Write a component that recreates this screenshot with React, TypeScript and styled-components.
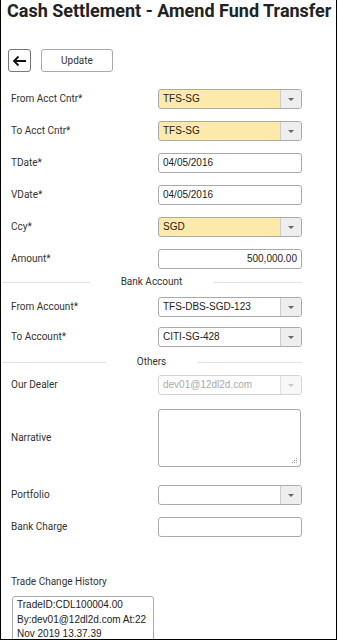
import React from "react";
import styled, { createGlobalStyle } from "styled-components";

const Global = createGlobalStyle`
  html, body { margin: 0; padding: 0; background: #fff; }
  body { font-family: Roboto, "Liberation Sans", sans-serif; }
  * { box-sizing: border-box; }
`;

const Page = styled.div`
  width: 337px;
  height: 640px;
  border: 1px solid #000;
  border-top: none;
  overflow: hidden;
  background: #fff;
`;

const Title = styled.h1`
  margin: 0;
  padding-left: 6px;
  font-family: Roboto, "Liberation Sans", sans-serif;
  font-weight: 700;
  font-size: 18px;
  line-height: 22px;
  color: #222;
  white-space: nowrap;
`;

const Toolbar = styled.div`
  display: flex;
  gap: 10px;
  margin-top: 27px;
  padding-left: 7px;
`;

const IconButton = styled.button`
  width: 23px;
  height: 23px;
  padding: 0;
  border: 1px solid #777;
  border-radius: 3px;
  background: #fff;
  display: flex;
  align-items: center;
  justify-content: center;
`;

const TextButton = styled.button`
  width: 72px;
  height: 23px;
  padding: 0;
  border: 1px solid #aaa;
  border-radius: 3px;
  background: #fff;
  font-family: Roboto, "Liberation Sans", sans-serif;
  font-size: 10px;
  color: #333;
`;

const Form = styled.div`
  display: flex;
  flex-direction: column;
`;

const Row = styled.div<{ $mt: number }>`
  display: grid;
  grid-template-columns: 147px 144px;
  align-items: center;
  padding-left: 10px;
  margin-top: ${(p) => p.$mt}px;
`;

const Label = styled.div`
  font-family: Roboto, "Liberation Sans", sans-serif;
  font-size: 10px;
  line-height: 14px;
  color: #333;
`;

const Select = styled.div<{ $tone: "yellow" | "white" | "disabled" }>`
  height: 20px;
  display: flex;
  border: 1px solid ${(p) => (p.$tone === "disabled" ? "#d4d4d4" : "#aaa")};
  border-radius: 3px;
  background: ${(p) => (p.$tone === "yellow" ? "#fde9a9" : "#fff")};
  overflow: hidden;
`;

const SelectValue = styled.div<{ $disabled?: boolean }>`
  flex: 1;
  padding-left: 4px;
  font-family: "Liberation Sans", Arial, sans-serif;
  font-size: 10px;
  line-height: 18px;
  color: ${(p) => (p.$disabled ? "#aaa" : "#222")};
`;

const SelectButton = styled.div<{ $disabled?: boolean }>`
  width: 21px;
  border-left: 1px solid ${(p) => (p.$disabled ? "#e0e0e0" : "#ccc")};
  background: ${(p) => (p.$disabled ? "#f7f7f7" : "#eeeeee")};
  display: flex;
  align-items: center;
  justify-content: center;
  &::after {
    content: "";
    border-left: 3px solid transparent;
    border-right: 3px solid transparent;
    border-top: 3px solid ${(p) => (p.$disabled ? "#c8c8c8" : "#666")};
  }
`;

const Input = styled.div<{ $align?: string }>`
  height: 20px;
  border: 1px solid #aaa;
  border-radius: 3px;
  background: #fff;
  padding: 0 4px;
  font-family: "Liberation Sans", Arial, sans-serif;
  font-size: 10px;
  line-height: 18px;
  color: #222;
  text-align: ${(p) => p.$align || "left"};
`;

const TextArea = styled.div`
  position: relative;
  width: 143px;
  height: 58px;
  border: 1px solid #aaa;
  border-radius: 3px;
  background: #fff;
`;

const Grip = styled.svg`
  position: absolute;
  right: 2px;
  bottom: 2px;
`;

const Separator = styled.div<{ $mt: number }>`
  display: flex;
  align-items: center;
  width: 301px;
  margin-top: ${(p) => p.$mt}px;
  &::before,
  &::after {
    content: "";
    flex: 1;
    height: 1px;
    background: #e2e2e2;
  }
`;

const SepText = styled.span`
  padding: 0 31px;
  font-family: Roboto, "Liberation Sans", sans-serif;
  font-size: 10px;
  line-height: 14px;
  color: #333;
`;

const HistoryLabel = styled.div`
  margin-top: 38px;
  padding-left: 10px;
  font-family: Roboto, "Liberation Sans", sans-serif;
  font-size: 10px;
  line-height: 14px;
  color: #333;
`;

const HistoryBox = styled.div`
  margin: 7px 0 0 11px;
  width: 142px;
  height: 60px;
  border: 1px solid #aaa;
  border-radius: 3px;
  padding: 1px 4px;
  font-family: "Liberation Sans", Arial, sans-serif;
  font-size: 10px;
  line-height: 14.5px;
  color: #222;
  white-space: nowrap;
`;

type Tone = "yellow" | "white" | "disabled";

const SelectField = ({ value, tone }: { value: string; tone: Tone }) => (
  <Select $tone={tone}>
    <SelectValue $disabled={tone === "disabled"}>{value}</SelectValue>
    <SelectButton $disabled={tone === "disabled"} />
  </Select>
);

export default function App() {
  return (
    <>
      <Global />
      <Page>
        <Title>Cash Settlement - Amend Fund Transfer</Title>
        <Toolbar>
          <IconButton aria-label="Back">
            <svg width="15" height="12" viewBox="0 0 15 12">
              <path d="M14 6H2M6.5 1.5L2 6l4.5 4.5" fill="none" stroke="#111" strokeWidth="1.8" />
            </svg>
          </IconButton>
          <TextButton>Update</TextButton>
        </Toolbar>
        <Form>
          <Row $mt={17}>
            <Label>From Acct Cntr*</Label>
            <SelectField value="TFS-SG" tone="yellow" />
          </Row>
          <Row $mt={12}>
            <Label>To Acct Cntr*</Label>
            <SelectField value="TFS-SG" tone="yellow" />
          </Row>
          <Row $mt={12}>
            <Label>TDate*</Label>
            <Input>04/05/2016</Input>
          </Row>
          <Row $mt={12}>
            <Label>VDate*</Label>
            <Input>04/05/2016</Input>
          </Row>
          <Row $mt={12}>
            <Label>Ccy*</Label>
            <SelectField value="SGD" tone="yellow" />
          </Row>
          <Row $mt={12}>
            <Label>Amount*</Label>
            <Input $align="right">500,000.00</Input>
          </Row>
          <Separator $mt={6}>
            <SepText>Bank Account</SepText>
          </Separator>
          <Row $mt={8}>
            <Label>From Account*</Label>
            <SelectField value="TFS-DBS-SGD-123" tone="white" />
          </Row>
          <Row $mt={10}>
            <Label>To Account*</Label>
            <SelectField value="CITI-SG-428" tone="white" />
          </Row>
          <Separator $mt={8}>
            <SepText>Others</SepText>
          </Separator>
          <Row $mt={6}>
            <Label>Our Dealer</Label>
            <SelectField value="dev01@12dl2d.com" tone="disabled" />
          </Row>
          <Row $mt={14}>
            <Label>Narrative</Label>
            <TextArea>
              <Grip width="6" height="6" viewBox="0 0 6 6">
                <rect x="4" y="0" width="1" height="1" fill="#999" />
                <rect x="2" y="2" width="1" height="1" fill="#999" />
                <rect x="4" y="2" width="1" height="1" fill="#999" />
                <rect x="0" y="4" width="1" height="1" fill="#999" />
                <rect x="2" y="4" width="1" height="1" fill="#999" />
                <rect x="4" y="4" width="1" height="1" fill="#999" />
              </Grip>
            </TextArea>
          </Row>
          <Row $mt={18}>
            <Label>Portfolio</Label>
            <SelectField value="" tone="white" />
          </Row>
          <Row $mt={12}>
            <Label>Bank Charge</Label>
            <Input />
          </Row>
        </Form>
        <HistoryLabel>Trade Change History</HistoryLabel>
        <HistoryBox>
          TradeID:CDL100004.00
          <br />
          By:dev01@12dl2d.com At:22
          <br />
          Nov 2019 13.37.39
        </HistoryBox>
      </Page>
    </>
  );
}
